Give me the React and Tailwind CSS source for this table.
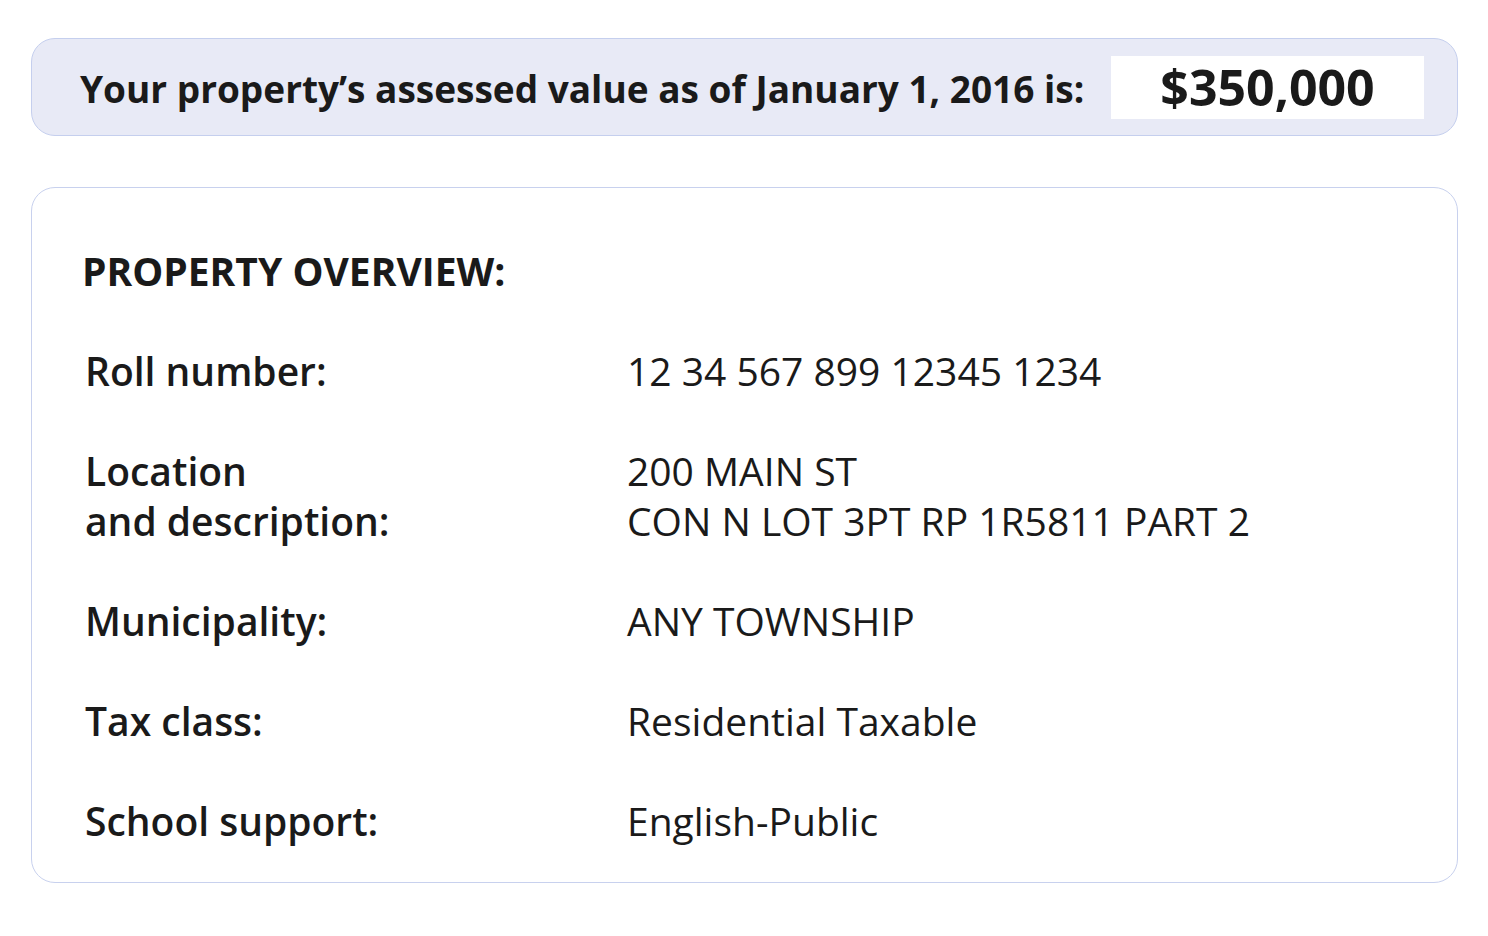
const rows = [
  { label: ['Roll number:'], value: ['12 34 567 899 12345 1234'] },
  { label: ['Location', 'and description:'], value: ['200 MAIN ST', 'CON N LOT 3PT RP 1R5811 PART 2'] },
  { label: ['Municipality:'], value: ['ANY TOWNSHIP'] },
  { label: ['Tax class:'], value: ['Residential Taxable'] },
  { label: ['School support:'], value: ['English-Public'] },
];

export default function App() {
  return (
    <div className="min-h-[936px] w-[1488px] bg-white pl-[31px] pt-[38px] text-[#1a1a1a] font-['Open_Sans',sans-serif]">
      {/* Assessed value banner */}
      <div className="flex h-[98px] w-[1427px] items-center justify-between rounded-[24px] border border-[#c5cfee] bg-[#e8eaf6] pl-[48px] pr-[33px]">
        <p className="mt-[3px] text-[37px] font-bold">
          Your property’s assessed value as of January 1, 2016 is:
        </p>
        <div className="flex h-[63px] w-[313px] items-center justify-center bg-white">
          <span className="text-[50px] font-bold">$350,000</span>
        </div>
      </div>

      {/* Property overview card */}
      <div className="mt-[51px] h-[696px] w-[1427px] rounded-[24px] border border-[#c8d1ee] bg-white pl-[50px] pt-[58px]">
        <h2 className="text-[39px] font-bold leading-[50px]">PROPERTY OVERVIEW:</h2>
        <div className="mt-[50px] ml-[3px] flex flex-col gap-[50px]">
          {rows.map((row, i) => (
            <div key={i} className="grid grid-cols-[542px_1fr] text-[39px] leading-[50px]">
              <div className="font-semibold">
                {row.label.map((l) => (
                  <div key={l}>{l}</div>
                ))}
              </div>
              <div>
                {row.value.map((v) => (
                  <div key={v}>{v}</div>
                ))}
              </div>
            </div>
          ))}
        </div>
      </div>
    </div>
  );
}
